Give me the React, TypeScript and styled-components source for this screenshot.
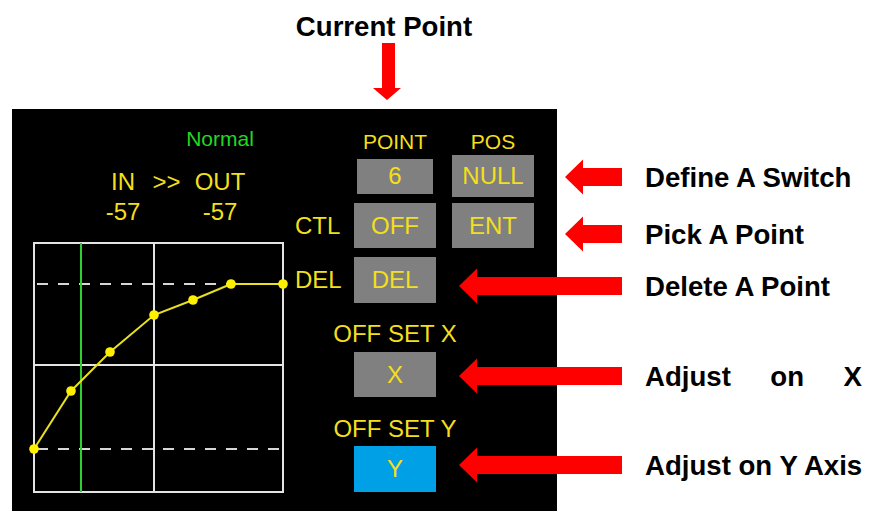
import styled, { createGlobalStyle } from 'styled-components';

const YELLOW = '#f2df1d';
const SANS = `'Liberation Sans', Arial, sans-serif`;

const CURVE = [
    [1, 207],
    [38, 149],
    [77, 110],
    [121, 73],
    [160, 58],
    [198, 42],
    [250, 42],
];

const NOTES = [
    { top: 50, length: 57, words: ['Define A Switch'] },
    { top: 21, length: 57, words: ['Pick A Point'] },
    { top: 16, length: 163, words: ['Delete A Point'] },
    { top: 54, length: 163, words: ['Adjust', 'on', 'X'], spread: true },
    { top: 53, length: 163, words: ['Adjust on Y Axis'] },
];

const GlobalStyle = createGlobalStyle`
    html, body {
        margin: 0;
        padding: 0;
        background: #ffffff;
        overflow: hidden;
    }
    body {
        font-family: ${SANS};
    }
`;

const LeftArrow = ({ length }: { length: number }) => {
    const tip = 163 - length;
    const base = tip + 18;
    return (
        <svg width="163" height="36" viewBox="0 0 163 36">
            <path
                d={`M${tip} 18 L${base} 0.5 L${base} 9 L163 9 L163 27 L${base} 27 L${base} 35.5 Z`}
                fill="#ff0000"
            />
        </svg>
    );
};

const DownArrow = () => (
    <svg width="28" height="57" viewBox="0 0 28 57">
        <path d="M9 0 L22 0 L22 45 L28 45 L14 57 L0 45 L9 45 Z" fill="#ff0000" />
    </svg>
);

const CurveChart = () => (
    <ChartSvg width="252" height="252" viewBox="0 0 252 252">
        <rect x="1" y="1" width="249" height="249" fill="none" stroke="#e4e4e4" strokeWidth="2" />
        <line x1="121" y1="1" x2="121" y2="250" stroke="#e4e4e4" strokeWidth="2" />
        <line x1="1" y1="123" x2="250" y2="123" stroke="#e4e4e4" strokeWidth="2" />
        <line x1="4" y1="42" x2="250" y2="42" stroke="#d6d6d6" strokeWidth="2" strokeDasharray="11 10" />
        <line x1="4" y1="207" x2="250" y2="207" stroke="#d6d6d6" strokeWidth="2" strokeDasharray="11 10" />
        <line x1="48" y1="1" x2="48" y2="250" stroke="#2fcf2f" strokeWidth="2" />
        <polyline
            points={CURVE.map(([x, y]) => `${x},${y}`).join(' ')}
            fill="none"
            stroke="#e8e020"
            strokeWidth="2"
        />
        {CURVE.map(([x, y]) => (
            <circle key={x} cx={x} cy={y} r="4.8" fill="#fff000" />
        ))}
    </ChartSvg>
);

const App = () => {
    return (
        <>
            <GlobalStyle />
            <Header>
                <Title>Current Point</Title>
                <DownArrow />
            </Header>

            <Stage>
                <Panel>
                    <LeftSection>
                        <Readout>
                            <Status>Normal</Status>
                            <Value>IN</Value>
                            <Value>&gt;&gt;</Value>
                            <Value>OUT</Value>
                            <Value>-57</Value>
                            <span />
                            <Value>-57</Value>
                        </Readout>
                        <CurveChart />
                    </LeftSection>

                    <Controls>
                        <Row $top={19} $height={24}>
                            <span />
                            <Caption $small>POINT</Caption>
                            <Caption $small>POS</Caption>
                        </Row>
                        <Row $top={3} $height={42}>
                            <span />
                            <Box $w={76} $h={35}>6</Box>
                            <Box $h={42}>NULL</Box>
                        </Row>
                        <Row $top={6} $height={45}>
                            <Label>CTL</Label>
                            <Box $h={45}>OFF</Box>
                            <Box $h={45}>ENT</Box>
                        </Row>
                        <Row $top={9} $height={46}>
                            <Label>DEL</Label>
                            <Box $h={46}>DEL</Box>
                        </Row>
                        <Row $top={17} $height={28}>
                            <span />
                            <Caption>OFF SET X</Caption>
                        </Row>
                        <Row $top={4} $height={45}>
                            <span />
                            <Box $h={45}>X</Box>
                        </Row>
                        <Row $top={18} $height={28}>
                            <span />
                            <Caption>OFF SET Y</Caption>
                        </Row>
                        <Row $top={3} $height={46}>
                            <span />
                            <Box $h={46} $active>
                                Y
                            </Box>
                        </Row>
                    </Controls>
                </Panel>

                <Notes>
                    {NOTES.map((note) => (
                        <Note key={note.words.join(' ')} $top={note.top}>
                            <LeftArrow length={note.length} />
                            <NoteText $spread={note.spread}>
                                {note.words.map((word) => (
                                    <span key={word}>{word}</span>
                                ))}
                            </NoteText>
                        </Note>
                    ))}
                </Notes>
            </Stage>
        </>
    );
};

export default App;

const Header = styled.div`
    display: flex;
    flex-direction: column;
    align-items: center;
    width: 774px;
    height: 109px;
    padding-top: 11px;
    box-sizing: border-box;
`;

const Title = styled.div`
    font-family: ${SANS};
    font-weight: bold;
    font-size: 27.6px;
    line-height: 31px;
    color: #000;
    padding-right: 6px;
    margin-bottom: 1px;
`;

const Stage = styled.div`
    display: grid;
    grid-template-columns: 12px 447px 98px 1fr;
    grid-template-rows: 402px;
`;

const Panel = styled.div`
    grid-column: 2 / 4;
    grid-row: 1;
    display: flex;
    background: #000000;
    color: ${YELLOW};
    font-family: ${SANS};
`;

const LeftSection = styled.div`
    width: 283px;
    padding-left: 21px;
    padding-top: 18px;
    box-sizing: border-box;
`;

const Readout = styled.div`
    display: grid;
    grid-template-columns: 40px 47px 60px;
    grid-template-rows: 41px 30px 31px;
    align-items: start;
    margin-left: 70px;
`;

const Status = styled.div`
    grid-column: 3;
    justify-self: center;
    white-space: nowrap;
    font-size: 21px;
    line-height: 24px;
    color: #22d822;
`;

const Value = styled.div`
    justify-self: center;
    white-space: nowrap;
    font-size: 24px;
    line-height: 27px;
`;

const ChartSvg = styled.svg`
    display: block;
    margin-top: 13px;
    overflow: visible;
`;

const Controls = styled.div`
    display: flex;
    flex-direction: column;
`;

const Row = styled.div<{ $top: number; $height: number }>`
    display: grid;
    grid-template-columns: 43px 82px 82px;
    column-gap: 16px;
    align-items: center;
    margin-top: ${({ $top }) => $top}px;
    height: ${({ $height }) => $height}px;
`;

const Caption = styled.div<{ $small?: boolean }>`
    justify-self: center;
    white-space: nowrap;
    font-size: ${({ $small }) => ($small ? 21 : 24)}px;
    line-height: 28px;
`;

const Label = styled.div`
    white-space: nowrap;
    font-size: 24px;
    line-height: 28px;
`;

const Box = styled.div<{ $w?: number; $h: number; $active?: boolean }>`
    display: flex;
    align-items: center;
    justify-content: center;
    justify-self: center;
    width: ${({ $w }) => $w ?? 82}px;
    height: ${({ $h }) => $h}px;
    background: ${({ $active }) => ($active ? '#00a0e6' : '#808080')};
    font-size: 24px;
    color: ${YELLOW};
`;

const Notes = styled.div`
    grid-column: 3 / 5;
    grid-row: 1;
    z-index: 1;
    display: flex;
    flex-direction: column;
`;

const Note = styled.div<{ $top: number }>`
    display: flex;
    align-items: center;
    gap: 23px;
    height: 36px;
    margin-top: ${({ $top }) => $top}px;
`;

const NoteText = styled.div<{ $spread?: boolean }>`
    display: flex;
    justify-content: ${({ $spread }) => ($spread ? 'space-between' : 'flex-start')};
    width: ${({ $spread }) => ($spread ? '217px' : 'auto')};
    font-family: ${SANS};
    font-weight: bold;
    font-size: 27.6px;
    line-height: 31px;
    color: #000;
    white-space: nowrap;
`;
